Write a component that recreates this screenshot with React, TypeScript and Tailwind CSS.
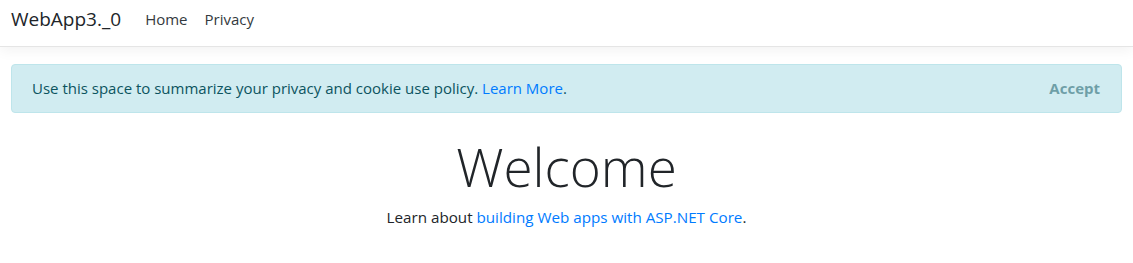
import React from "react";

export default function App() {
  const font = { fontFamily: '"Open Sans", "Noto Sans", sans-serif' };
  return (
    <div className="min-h-[263px] bg-white text-[#212529]" style={font}>
      <header className="h-[47px] border-b border-[#e5e5e5] bg-white shadow-[0_4px_12px_rgba(0,0,0,0.05)]">
        <nav className="flex h-[46px] items-center px-[11px] pb-[7px]">
          <a className="mr-[24px] text-[19px] leading-none text-[#212529]">WebApp3._0</a>
          <a className="text-[15px] leading-none text-[#343a40]">Home</a>
          <a className="ml-[17px] text-[15px] leading-none text-[#343a40]">Privacy</a>
        </nav>
      </header>
      <main className="px-[11px] pt-[17px]">
        <div className="flex h-[49px] items-center justify-between rounded-[4px] border border-[#bee5eb] bg-[#d1ecf1] pl-[20px] pr-[21px] text-[#0c5460]">
          <span className="text-[15px]">
            Use this space to summarize your privacy and cookie use policy.{" "}
            <a className="text-[#007bff]">Learn More</a>.
          </span>
          <button className="text-[15px] font-bold text-[#0c5460] opacity-50">Accept</button>
        </div>
        <div className="flex flex-col items-center pt-[22px]">
          <h1 className="text-[53px] font-light leading-[1.2] text-[#212529]">Welcome</h1>
          <p className="mt-[7px] text-[15.2px] text-[#212529]">
            Learn about <a className="text-[#007bff]">building Web apps with ASP.NET Core</a>.
          </p>
        </div>
      </main>
    </div>
  );
}
